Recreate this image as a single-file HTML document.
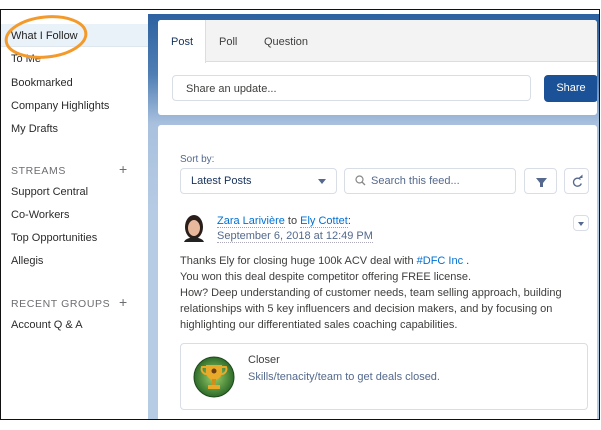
<!DOCTYPE html>
<html><head><meta charset="utf-8"><style>
*{margin:0;padding:0;box-sizing:border-box}
body{width:601px;height:430px;background:#fff;font-family:"Liberation Sans",sans-serif;color:#16325c;position:relative;overflow:hidden;font-size:11px}
.frame{position:absolute;left:0;top:9px;width:600px;height:411px;border:1.5px solid #111}
.left{position:absolute;left:1px;top:10px;width:147px;height:409px;background:#fff}
.item{position:absolute;left:10px;font-size:11px;color:#2b2b2b}
.sel{position:absolute;left:0;top:14px;width:147px;height:23px;background:#e9f1f9;border-bottom:1px solid #dfe6ee}
.hdr{position:absolute;left:10px;font-size:10.5px;color:#6b6d70;letter-spacing:.6px}
.plus{position:absolute;left:118px;font-size:14px;color:#6b6d70}
.main{position:absolute;left:148px;top:14px;width:451px;height:405px;background:linear-gradient(#2d62a0 0,#4f7eb4 60px,#a9c1de 110px,#b6cbe4 200px)}
.panel{position:absolute;left:10px;top:6px;width:439px;height:95px;background:#fff;border-radius:3px;overflow:hidden}
.tabs{height:42px;background:#f3f3f3;border-bottom:1px solid #d8dde6;position:relative}
.tab{position:absolute;top:16px;font-size:11px;color:#3e3e3c}
.post{position:absolute;left:0;top:0;width:48px;height:43px;background:#fff;border-right:1px solid #d8dde6}
.inp{position:absolute;left:14px;top:55px;width:359px;height:26px;border:1px solid #d8dde6;border-radius:4px;font-size:11px;color:#3e3e3c;padding:7px 13px}
.btn{position:absolute;left:386px;top:55px;width:54px;height:27px;background:#1b5297;border-radius:4px;color:#fff;font-size:11px;text-align:center;line-height:27px}
.feed{position:absolute;left:10px;top:111px;width:439px;height:300px;background:#fff;border-radius:3px}
.box{position:absolute;border:1px solid #d8dde6;border-radius:4px;background:#fff}
a{color:#0070d2;text-decoration:none;border-bottom:1px dotted #8aa}
.txt{position:absolute;left:22px;top:128px;font-size:11px;line-height:16px;color:#3e3e3c}
</style></head><body>
<div class="left">
<div class="sel"></div>
<div class="item" style="top:20px;color:#222">What I Follow</div>
<div class="item" style="top:43px">To Me</div>
<div class="item" style="top:67px">Bookmarked</div>
<div class="item" style="top:90px">Company Highlights</div>
<div class="item" style="top:113px">My Drafts</div>
<div class="hdr" style="top:155px">STREAMS</div><div class="plus" style="top:151px">+</div>
<div class="item" style="top:176px">Support Central</div>
<div class="item" style="top:199px">Co-Workers</div>
<div class="item" style="top:222px">Top Opportunities</div>
<div class="item" style="top:245px">Allegis</div>
<div class="hdr" style="top:288px">RECENT GROUPS</div><div class="plus" style="top:284px">+</div>
<div class="item" style="top:309px">Account Q &amp; A</div>
</div>
<svg style="position:absolute;left:2px;top:12px" width="90" height="52"><ellipse cx="44" cy="25" rx="40" ry="20" fill="none" stroke="#f39a2b" stroke-width="3" transform="rotate(-6 44 25)"/></svg>
<div class="main">
<div class="panel">
<div class="tabs"><div class="post"></div>
<div class="tab" style="left:13px;color:#16325c">Post</div>
<div class="tab" style="left:61px">Poll</div>
<div class="tab" style="left:106px">Question</div></div>
<div class="inp">Share an update...</div>
<div class="btn">Share</div>
</div>
<div class="feed">
<div style="position:absolute;left:22px;top:29px;font-size:10px;color:#54698d">Sort by:</div>
<div class="box" style="left:22px;top:43px;width:157px;height:26px;padding:6px 10px;color:#16325c">Latest Posts<span style="position:absolute;right:10px;top:10px;border:4.5px solid transparent;border-top:5px solid #54698d"></span></div>
<div class="box" style="left:186px;top:43px;width:172px;height:26px;padding:6px 10px;color:#54698d"><svg width="11" height="11" style="vertical-align:-2px;margin-right:5px"><circle cx="4.5" cy="4.5" r="3.5" fill="none" stroke="#888" stroke-width="1.2"/><line x1="7" y1="7" x2="10" y2="10" stroke="#888" stroke-width="1.3"/></svg>Search this feed...</div>
<div class="box" style="left:366px;top:43px;width:33px;height:26px"><svg width="33" height="26"><path d="M11 9h11l-4 5v4h-3v-4z" fill="#54698d"/></svg></div>
<div class="box" style="left:406px;top:43px;width:25px;height:26px"><svg width="25" height="26"><path d="M15.5 10.5a4 4 0 1 0 0.8 4" fill="none" stroke="#54698d" stroke-width="1.3"/><path d="M13.5 9h4v-3.5z" fill="#54698d"/></svg></div>
<div class="box" style="left:415px;top:90px;width:16px;height:16px"><span style="position:absolute;left:4px;top:6px;border:3.5px solid transparent;border-top:4px solid #54698d"></span></div>
<svg style="position:absolute;left:24px;top:89px" width="24" height="28"><ellipse cx="12" cy="13" rx="9" ry="12" fill="#2a1e1a"/><ellipse cx="12" cy="14" rx="6" ry="8" fill="#e8b89c"/><path d="M2 28c2-6 18-6 20 0z" fill="#222"/></svg>
<div style="position:absolute;left:59px;top:89px;font-size:11px;line-height:15px;color:#3e3e3c"><a>Zara Larivière</a> to <a>Ely Cottet</a>:<br><span style="color:#54698d;border-bottom:1px dotted #aab">September 6, 2018 at 12:49 PM</span></div>
<div class="txt">Thanks Ely for closing huge 100k ACV deal with <span style="color:#0070d2">#DFC Inc</span> .<br>You won this deal despite competitor offering FREE license.<br>How? Deep understanding of customer needs, team selling approach, building<br>relationships with 5 key influencers and decision makers, and by focusing on<br>highlighting our differentiated sales coaching capabilities.</div>
<div class="box" style="left:22px;top:218px;width:408px;height:67px">
<svg style="position:absolute;left:12px;top:12px" width="42" height="42"><defs><radialGradient id="g"><stop offset="0" stop-color="#9cd36a"/><stop offset="1" stop-color="#2e6b2a"/></radialGradient></defs><circle cx="21" cy="21" r="20" fill="url(#g)" stroke="#1f4a1c"/><path d="M13 9h16v7a8 8 0 0 1-16 0z" fill="#e9a929"/><path d="M13 11h-4a5 5 0 0 0 5 7M29 11h4a5 5 0 0 1-5 7" fill="none" stroke="#e9a929" stroke-width="2"/><rect x="19" y="23" width="4" height="6" fill="#d18f1a"/><rect x="15" y="29" width="12" height="4" fill="#e9a929"/><circle cx="21" cy="15" r="2.5" fill="#6b3d10"/></svg>
<div style="position:absolute;left:67px;top:10px;color:#3e3e3c">Closer</div>
<div style="position:absolute;left:67px;top:27px;color:#54698d">Skills/tenacity/team to get deals closed.</div>
</div>
</div>
</div>
<div class="frame"></div>
</body></html>
